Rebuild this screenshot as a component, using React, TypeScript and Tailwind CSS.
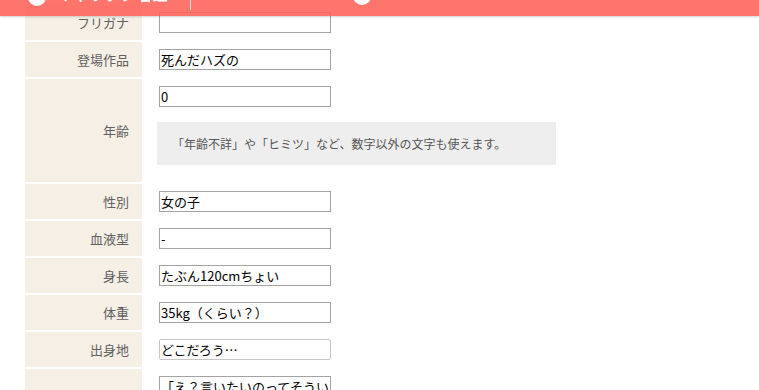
import React from "react";

const font = { fontFamily: '"Noto Sans CJK JP", "Noto Sans", sans-serif' };

type Row = { label: string; value: string; light?: boolean };

const rowsTop: Row[] = [
  { label: "フリガナ", value: "" },
  { label: "登場作品", value: "死んだハズの" },
];

const rowsBottom: Row[] = [
  { label: "性別", value: "女の子" },
  { label: "血液型", value: "-" },
  { label: "身長", value: "たぶん120cmちょい" },
  { label: "体重", value: "35kg（くらい？）" },
  { label: "出身地", value: "どこだろう…", light: true },
  { label: "", value: "「え？言いたいのってそういうこと？」" },
];

function Field({ value, light }: { value: string; light?: boolean }) {
  return (
    <input
      readOnly
      defaultValue={value}
      className={
        "ml-[2px] block h-[21px] w-[172px] bg-white px-[1px] text-[13px] leading-[19px] text-black outline-none " +
        (light ? "rounded-[2px] border border-[#c6c6c6]" : "border border-[#a3a3a3]")
      }
      style={font}
    />
  );
}

function FormRow({ row }: { row: Row }) {
  return (
    <div className="flex h-[35px] gap-[2px]">
      <div className="flex w-[117px] shrink-0 items-center justify-end bg-[#f5efe6] pr-[13px] text-[13px] text-[#606060]">
        {row.label}
      </div>
      <div className="flex-1 pl-[13px] pt-[7px]">
        <Field value={row.value} light={row.light} />
      </div>
    </div>
  );
}

export default function App() {
  return (
    <div className="relative h-[390px] w-[759px] overflow-hidden bg-white" style={font}>
      <div className="fixed left-0 top-0 z-10 h-[16px] w-full overflow-hidden bg-[rgba(255,98,88,0.88)] shadow-[0_1px_2px_rgba(0,0,0,0.18)]">
        <div className="-mt-[27px] flex h-[40px] items-start">
          <div className="ml-[28px] mt-[15px] flex h-[18px] w-[18px] items-center justify-center rounded-full bg-white">
            <div className="h-[6px] w-[6px] rounded-full bg-[#ff7a70]" />
          </div>
          <div className="ml-[11px] mt-[13px] text-[15px] font-bold leading-none tracking-[1px] text-white">
            キャラクタ名鑑
          </div>
          <div className="ml-[22px] mt-[27px] h-[10px] w-px bg-white/70" />
          <div className="ml-[162px] mt-[14px] h-[18px] w-[18px] rounded-full bg-white" />
        </div>
      </div>

      <div className="ml-[25px] flex w-[560px] flex-col gap-[2px] pt-[5px]">
        {rowsTop.map((r) => (
          <FormRow key={r.label} row={r} />
        ))}
        <div className="flex h-[103px] gap-[2px]">
          <div className="flex w-[117px] shrink-0 items-center justify-end bg-[#f5efe6] pr-[13px] text-[13px] text-[#606060]">
            年齢
          </div>
          <div className="flex-1 pl-[13px] pt-[7px]">
            <Field value="0" />
            <div className="mt-[15px] flex h-[43px] w-[399px] items-center bg-[#eeeeee] pl-[15px] text-[12px] text-[#555]">
              「年齢不詳」や「ヒミツ」など、数字以外の文字も使えます。
            </div>
          </div>
        </div>
        {rowsBottom.map((r, i) => (
          <FormRow key={i} row={r} />
        ))}
      </div>
    </div>
  );
}
